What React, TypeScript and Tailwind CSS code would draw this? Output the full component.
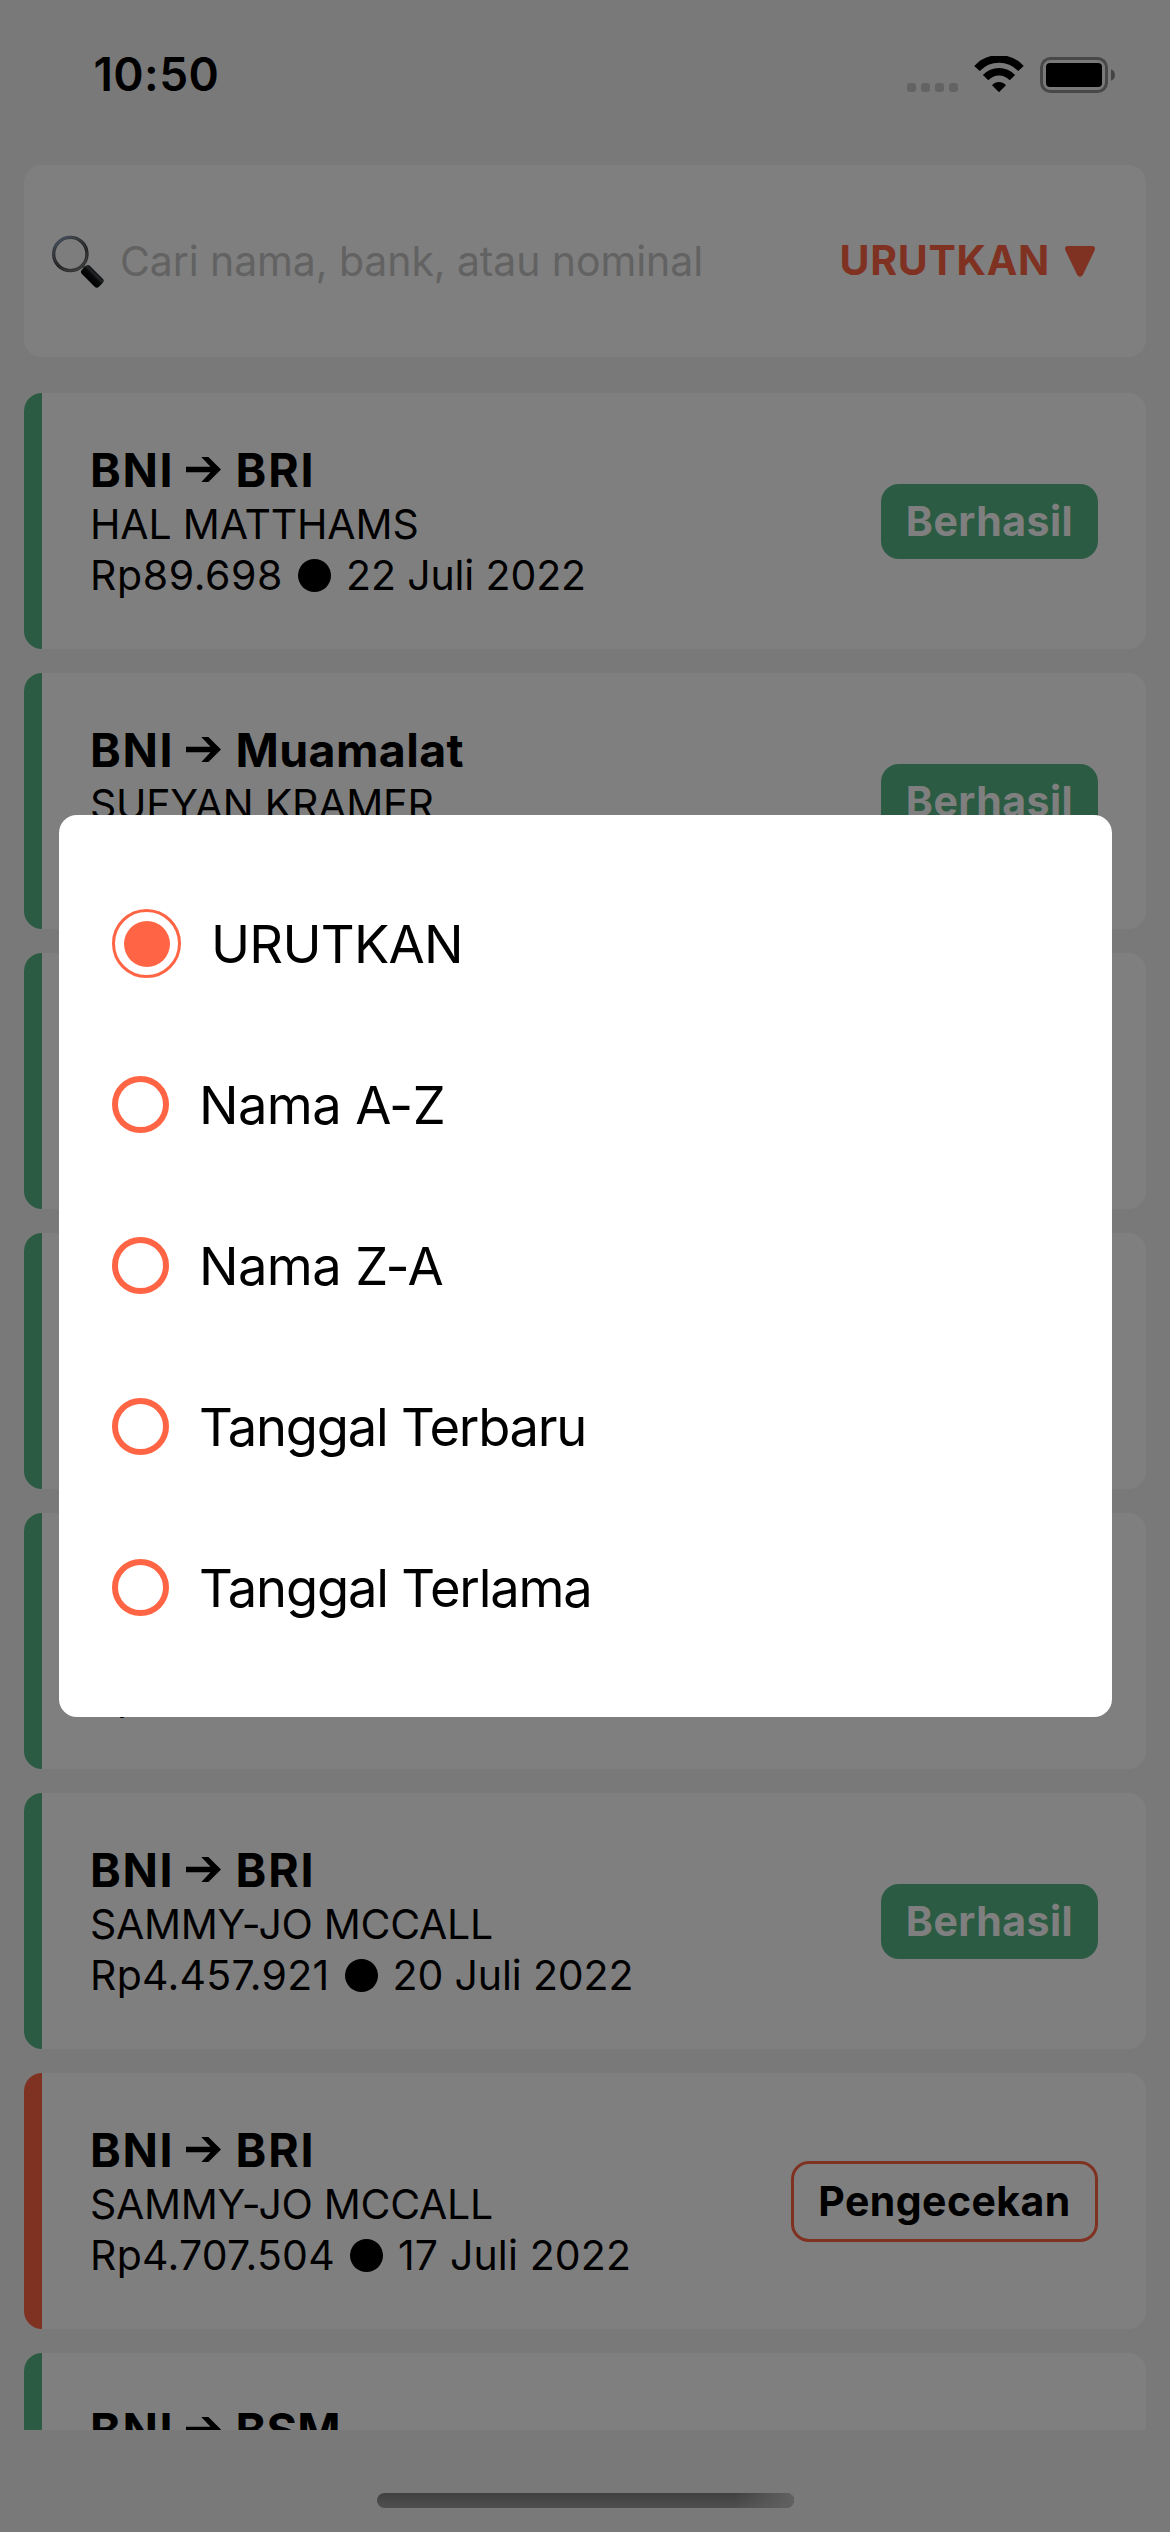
type Transfer = {
  from: string;
  to: string;
  name: string;
  amount: string;
  date: string;
  done: boolean;
  toSpacing?: string;
  nameSpacing?: string;
  amountSpacing?: string;
  dateSpacing?: string;
};

const transfers: Transfer[] = [
  { from: "BNI", to: "BRI", name: "HAL MATTHAMS", amount: "Rp89.698", date: "22 Juli 2022", done: true, nameSpacing: "tracking-[-0.15px]", amountSpacing: "tracking-[0.6px]" },
  { from: "BNI", to: "Muamalat", name: "SUFYAN KRAMER", amount: "Rp89.698", date: "22 Juli 2022", done: true, toSpacing: "tracking-[0.4px]", nameSpacing: "tracking-[-0.25px]" },
  { from: "BNI", to: "BRI", name: "SUFYAN KRAMER", amount: "Rp89.698", date: "22 Juli 2022", done: true },
  { from: "BNI", to: "BRI", name: "HAL MATTHAMS", amount: "Rp89.698", date: "22 Juli 2022", done: true },
  { from: "BNI", to: "BRI", name: "HAL MATTHAMS", amount: "Rp89.698", date: "22 Juli 2022", done: true, amountSpacing: "tracking-[0.6px]" },
  { from: "BNI", to: "BRI", name: "SAMMY-JO MCCALL", amount: "Rp4.457.921", date: "20 Juli 2022", done: true },
  { from: "BNI", to: "BRI", name: "SAMMY-JO MCCALL", amount: "Rp4.707.504", date: "17 Juli 2022", done: false, dateSpacing: "tracking-[0.15px]" },
  { from: "BNI", to: "BSM", name: "SAMMY-JO MCCALL", amount: "Rp4.707.504", date: "17 Juli 2022", done: true, toSpacing: "tracking-[0.3px]" },
];

const options = [
  { label: "URUTKAN", spacing: "tracking-[-0.7px]" },
  { label: "Nama A-Z", spacing: "tracking-[-0.6px]" },
  { label: "Nama Z-A", spacing: "tracking-[-0.6px]" },
  { label: "Tanggal Terbaru", spacing: "tracking-[-1.25px]" },
  { label: "Tanggal Terlama", spacing: "tracking-[-1.2px]" },
];

function StatusBar() {
  return (
    <header className="flex h-[148px] shrink-0 items-center justify-between pr-[55px] pl-[93.5px]">
      <span className="text-[46px] leading-[56px] font-semibold tracking-[0.4px]">10:50</span>
      <div className="flex h-[37px] items-end">
        <div className="mb-px flex gap-[5px]">
          {[0, 1, 2, 3].map((i) => (
            <span key={i} className="size-[9px] rounded-[3px] bg-[#c6c6c6]" />
          ))}
        </div>
        <svg className="mb-px ml-[16px] h-[36px] w-[50px]" viewBox="0 0 50 36" fill="none">
          <path d="M3 12.5C15-.3 35-.3 47 12.5" stroke="#000" strokeWidth="7.6" />
          <path d="M11.6 21.6C19.2 13.8 30.8 13.8 38.4 21.6" stroke="#000" strokeWidth="7.6" />
          <path d="M18 29.2C22 24.8 28 24.8 32 29.2L25 36.2Z" fill="#000" />
        </svg>
        <svg className="ml-[16px] h-[36px] w-[75px]" viewBox="0 0 75 36">
          <rect x="1.5" y="1.5" width="65" height="33" rx="9" fill="none" stroke="#909090" strokeWidth="3" />
          <rect x="6" y="6" width="56" height="24" rx="4" fill="#000" />
          <path d="M71 12.2C76.3 14.2 76.3 21.8 71 23.8Z" fill="#888888" />
        </svg>
      </div>
    </header>
  );
}

function MagnifierIcon() {
  return (
    <svg className="size-[60px]" viewBox="15 15 180 180">
      <defs>
        <linearGradient id="ring" x1="0" y1="0" x2="0.6" y2="1">
          <stop offset="0" stopColor="#86a6cc" />
          <stop offset="0.3" stopColor="#666e78" />
          <stop offset="0.7" stopColor="#3c3c3c" />
          <stop offset="1" stopColor="#6a6a6a" />
        </linearGradient>
        <linearGradient id="grip" x1="0" y1="1" x2="0" y2="0">
          <stop offset="0" stopColor="#000" />
          <stop offset="0.55" stopColor="#101314" />
          <stop offset="0.8" stopColor="#4a5054" />
          <stop offset="1" stopColor="#0b0b0b" />
        </linearGradient>
      </defs>
      <path d="M112 115L125 128" stroke="#777" strokeWidth="10" />
      <circle cx="79" cy="84" r="50" fill="#fafafa" stroke="url(#ring)" strokeWidth="10" />
      <circle cx="79" cy="84" r="50" fill="none" stroke="#c5c9cc" strokeWidth="2" opacity="0.45" />
      <rect x="109" y="134" width="72" height="34" rx="9" fill="url(#grip)" transform="rotate(45 145 151)" />
    </svg>
  );
}

function SearchBar() {
  return (
    <section className="mx-6 mt-[17px] flex h-[192px] shrink-0 items-center rounded-[18px] bg-white pr-[51px] pl-[25px] text-[41px] leading-[50px]">
      <MagnifierIcon />
      <span className="ml-[11px] flex-1 tracking-[-0.1px] text-[#c5c5c5]">Cari nama, bank, atau nominal</span>
      <button className="mb-[2px] flex items-center text-[#ff6544]">
        <span className="font-bold tracking-[0.7px]">URUTKAN</span>
        <svg className="mt-[2px] ml-[15px] h-[31px] w-[30px]" viewBox="0 0 30 31" fill="currentColor">
          <path d="M2.8 0H27.2Q31 .4 29.6 4.5L18 28.5Q15 33 12 28.5L.4 4.5Q-1 .4 2.8 0Z" />
        </svg>
      </button>
    </section>
  );
}

function ArrowIcon() {
  return (
    <svg className="mt-[-1px] mr-[14.5px] ml-[11.6px] h-[25px] w-[35px]" viewBox="0 0 35 25">
      <path d="M0 9.8H24.5L15.3 0H22.4L35 12.5L22.4 25H15.3L24.5 15.2H0Z" />
    </svg>
  );
}

function TransferCard({ item }: { item: Transfer }) {
  return (
    <article className="flex h-[256px] shrink-0 overflow-hidden rounded-[18px] bg-white">
      <div className={item.done ? "w-[18px] bg-[#57b684]" : "w-[18px] bg-[#ff6544]"} />
      <div className="flex flex-1 items-center justify-between pr-12 pl-12">
        <div className="text-[41px] leading-[51px]">
          <h2 className="flex items-center text-[46.5px] leading-[57px] font-bold">
            <span className="tracking-[1.7px]">{item.from}</span>
            <ArrowIcon />
            <span className={item.toSpacing ?? "tracking-[1.9px]"}>{item.to}</span>
          </h2>
          <p className={item.nameSpacing ?? "tracking-[-0.3px]"}>{item.name}</p>
          <p className="flex items-center">
            <span className={item.amountSpacing ?? "tracking-[0.27px]"}>{item.amount}</span>
            <span className="mr-[15px] ml-[15px] size-[33px] rounded-full bg-black" />
            <span className={item.dateSpacing ?? "tracking-[-0.13px]"}>{item.date}</span>
          </p>
        </div>
        {item.done ? (
          <span className="flex h-[75px] w-[217px] items-center justify-center rounded-[18px] bg-[#57b684] pt-[2px] text-[41px] font-bold tracking-[0.5px] text-white">
            Berhasil
          </span>
        ) : (
          <span className="flex h-[81px] w-[307px] items-center justify-center rounded-[18px] border-3 border-[#ff6544] pt-[2px] text-[41px] font-bold tracking-[0.43px]">
            Pengecekan
          </span>
        )}
      </div>
    </article>
  );
}

function SortModal() {
  return (
    <div className="absolute inset-0 flex items-center justify-center bg-black/50">
      <div className="h-[902px] w-[1053px] rounded-[18px] bg-white pt-[48px] pl-[53.5px]" role="dialog">
        {options.map((option, i) => (
          <label key={option.label} className="flex h-[161px] items-center gap-[30px] text-[52.5px] leading-[64px]">
            {i === 0 ? (
              <span className="flex size-[69px] items-center justify-center rounded-full border-3 border-[#ff6544]">
                <span className="size-[46px] rounded-full bg-[#ff6544]" />
              </span>
            ) : (
              <span className="size-[57px] rounded-full border-6 border-[#ff6544]" />
            )}
            <span className={option.spacing}>{option.label}</span>
          </label>
        ))}
      </div>
    </div>
  );
}

export default function App() {
  return (
    <div className="relative flex h-[2532px] w-[1170px] flex-col overflow-hidden bg-[#f2f2f2] font-['Inter',sans-serif] text-black">
      <StatusBar />
      <SearchBar />
      <main className="mx-6 mt-9 flex h-[2037px] shrink-0 flex-col gap-6 overflow-hidden">
        {transfers.map((item, i) => (
          <TransferCard key={i} item={item} />
        ))}
      </main>
      <div className="mx-auto mt-[63px] h-[15px] w-[417px] overflow-hidden rounded-full bg-linear-to-b from-[#808080] to-[#a0a0a0]">
        <div className="ml-auto h-full w-[60px] bg-linear-to-r from-[#c4c4c4]/0 to-[#c4c4c4]" />
      </div>
      <SortModal />
    </div>
  );
}
